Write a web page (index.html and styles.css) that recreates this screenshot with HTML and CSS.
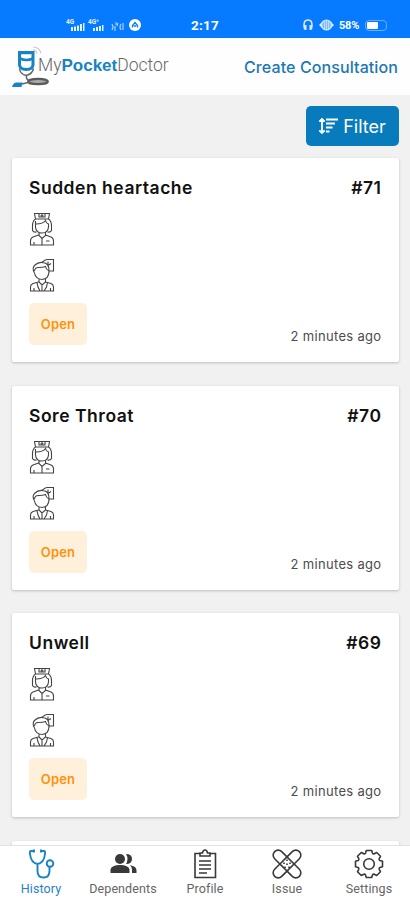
FILE: index.html
```html
<!DOCTYPE html>
<html lang="en">
<head>
<meta charset="utf-8">
<meta name="viewport" content="width=device-width, initial-scale=1">
<title>MyPocketDoctor</title>
<link rel="stylesheet" href="styles.css">
</head>
<body>
<svg class="defs" aria-hidden="true">
  <symbol id="nurse" viewBox="0 0 26 34">
    <path d="M5.500 1.500h15l-1 5.500h-13ZM10 1.500V5h6V1.500M13 2v3.500M11.500 3.800h3M6.500 7Q3.500 9 3.500 14v4.500q1 2 4 1.500M19.500 7Q22.500 9 22.500 14v4.500q-1 2-4 1.500M7 12Q14 12 16.500 8.500Q17 11 19.500 12v3Q19 21 13 21Q7 21 6.500 15V9M10 20.500v3l3 3 3.500-3v-3M9.500 23L4 25Q1.500 26 1.500 29v4h23v-4Q24.500 26 22 25l-5.500-2M13 26.500V33M17 29h3.500M5 30v3"/>
  </symbol>
  <symbol id="patient" viewBox="0 0 26 34">
    <path d="M13 4.500Q16 1.500 18 1.500h6.500V13H20M19 3.500v4l3-2M5.500 15Q2.500 10 6 7Q10 3 16 5Q20 6.500 20 12v3M5.500 13Q6 9 10 9.500Q14 9.500 16.500 8.500Q17 11.500 20 13Q20 21 13 21.500Q6.500 21 5.500 15M10 21v3l3 3 3.500-3v-3M9.500 24L4 25.500Q1.500 26.500 1.500 29v4h23v-4Q24.500 26.500 22 25.500L16.500 24M8 24.500L9 29l2 4M18.500 24.500L17.500 29l-2.500 4M13 27v6M5 30v3M21.500 30v3"/>
  </symbol>
</svg>
<div class="app">
  <div class="status">
    <div class="status-left">
      <svg width="78" height="14" viewBox="0 0 78 14">
        <g fill="#e3f0ff">
          <text x="0" y="6" class="net">4G</text>
          <path d="M5 9h2v4H5zM8 8.500h2V13H8zM11 7.500h2V13h-2zM14 6h2v7h-2zM17 5h1.500v8H17z"/>
          <text x="22" y="6" class="net">4G⁺</text>
          <path d="M27 10h2v3h-2zM30 9h2v4h-2zM33 8h2v5h-2zM36 7h1.500v6H36z"/>
        </g>
        <path d="M46 6q2 3 0 6M50 4v3M49 8v5M52 5l-1 3M57 5v7M55 6q-2 3 0 6" fill="none" stroke="#a9d0ff" stroke-width="1.200"/>
        <circle cx="69" cy="7" r="6" fill="#fff"/>
        <path d="M66.500 9.500v-2l2.500-3 2.500 3v2M67.800 8h2.400" fill="none" stroke="#0879f7" stroke-width="1.300"/>
      </svg>
    </div>
    <span class="clock">2:17</span>
    <div class="status-right">
      <svg width="33" height="14" viewBox="0 0 33 14">
        <path d="M2.500 11Q.5 2 6 2t3.500 9" fill="none" stroke="#d8eaff" stroke-width="1.500"/>
        <path d="M1.500 7h3v5h-2zM7.500 7h3l-1 5h-2z" fill="#d8eaff"/>
        <path d="M17 7l3-3v6zM32 7l-3-3v6z" fill="#d8eaff"/>
        <circle cx="24.500" cy="7" r="5" fill="#7dbbff" stroke="#d8eaff" stroke-width="1.200"/>
        <path d="M22.500 3v8M24.500 2v10M26.500 3v8" stroke="#d8eaff" stroke-width=".7"/>
      </svg>
      <span class="percent">58%</span>
      <span class="battery"><i></i></span>
    </div>
  </div>
  <header class="header">
    <div class="logo">
      <svg width="40" height="46" viewBox="0 0 40 46">
        <path d="M21 6q3 0 4 3.500M21 3q6 0 8 6" fill="none" stroke="#c4c4c4" stroke-width="1.200"/>
        <path d="M7.500 24.500Q8 30 14 31.500Q20.500 30 21.500 24.500M14.500 31.500q-1 5 5 5.500" fill="none" stroke="#666" stroke-width="1.500"/>
        <path d="M7.500 8.500h13.500v12q0 5-6.700 5t-6.800-5z" fill="#fff" stroke="#1683c4" stroke-width="3"/>
        <path d="M8 14.500q6.500 3 13 0" fill="none" stroke="#1683c4" stroke-width="2.600"/>
        <path d="M9 9.500h10" stroke="#1683c4" stroke-width="1.500"/>
        <ellipse cx="26" cy="37.500" rx="9.800" ry="2.700" fill="#aaa" stroke="#5a5a5a" stroke-width="2.300"/>
        <path d="M10 40l8-2" stroke="#666" stroke-width="1.500"/>
        <path d="M0 43q1-4 4-4.500h6.500L9.500 43z" fill="#1683c4"/>
      </svg>
      <span class="wordmark">My<b>Pocket</b>Doctor</span>
    </div>
    <a class="create">Create Consultation</a>
  </header>
  <main class="content">
    <div class="toolbar">
      <button class="filter">
        <svg width="21" height="18" viewBox="0 0 21 18" fill="none" stroke="#fff" stroke-width="1.800">
          <path d="M4 2v14M1.300 4.700L4 2l2.700 2.700M1.300 13.300L4 16l2.700-2.700M8 2.500h12M8 6.500h9M8 10.500h6.500M8 14.500h3.500"/>
        </svg>
        <span>Filter</span>
      </button>
    </div>
    <article class="card">
      <div class="card-head"><h2>Sudden heartache</h2><span>#71</span></div>
      <svg class="person"><use href="#nurse"/></svg>
      <svg class="person"><use href="#patient"/></svg>
      <div class="card-foot"><span class="badge">Open</span><time>2 minutes ago</time></div>
    </article>
    <article class="card">
      <div class="card-head"><h2>Sore Throat</h2><span>#70</span></div>
      <svg class="person"><use href="#nurse"/></svg>
      <svg class="person"><use href="#patient"/></svg>
      <div class="card-foot"><span class="badge">Open</span><time>2 minutes ago</time></div>
    </article>
    <article class="card">
      <div class="card-head"><h2>Unwell</h2><span>#69</span></div>
      <svg class="person"><use href="#nurse"/></svg>
      <svg class="person"><use href="#patient"/></svg>
      <div class="card-foot"><span class="badge">Open</span><time>2 minutes ago</time></div>
    </article>
    <article class="card"></article>
  </main>
  <nav class="tabs">
    <a class="tab active">
      <svg viewBox="0 0 30 30" fill="none" stroke="#1683c4" stroke-width="1.900">
        <path d="M8 2H5Q3.500 2 4 5q1 9 7.500 10Q18 14 19 5q.5-3-1-3h-3M8 .5v3M15 .5v3M11.500 15v7q0 6.500 6 6.500t6-6.500v-4"/>
        <circle cx="24" cy="14.500" r="3.300"/>
      </svg>
      <span>History</span>
    </a>
    <a class="tab">
      <svg viewBox="0 0 30 30" fill="#393939">
        <circle cx="12" cy="10" r="5"/>
        <path d="M2.500 24v-3.500q1-4.500 9.500-4.500t9.500 4.500v3.500zM18 5q6 0 6 5t-6 5q3-5 0-10zM22 16.300q6.500 1 6.500 5v2.700h-4.500v-3.500q0-2.500-2-4.200z"/>
      </svg>
      <span>Dependents</span>
    </a>
    <a class="tab">
      <svg viewBox="0 0 30 30" fill="none" stroke="#393939" stroke-width="1.600">
        <path d="M10 4.500H5v24h20.500v-24H20M10 7V4h2.500q.5-3 2.500-3t2.500 3H20v3zM9 12h12M9 16h12M9 20h12M9 24h8"/>
      </svg>
      <span>Profile</span>
    </a>
    <a class="tab">
      <svg viewBox="0 0 30 30" fill="none" stroke="#393939" stroke-width="1.600">
        <g transform="rotate(45 15 15)"><rect x="-2.500" y="10" width="35" height="10" rx="5"/><path d="M10 10V2.500a5 5 0 0 1 10 0V10M10 20v7.500a5 5 0 0 0 10 0V20M10 10v10M20 10v10"/></g>
        <path d="M15 10.500v1.500M12 13.500v1.500M18 13.500v1.500M15 14.500v1.500M13 17.500v1.500M17 17.500v1.500"/>
      </svg>
      <span>Issue</span>
    </a>
    <a class="tab">
      <svg viewBox="-15 -15 30 30" fill="none" stroke="#393939" stroke-width="1.600" stroke-linejoin="round">
        <path d="M10.900-3.500L13.500-2.700V2.700L10.900 3.500Q9.800 4.200 10.200 5.300L11.500 7.700L7.700 11.500L5.300 10.200Q4.200 9.800 3.500 10.900L2.700 13.500H-2.700L-3.500 10.900Q-4.200 9.800-5.300 10.200L-7.700 11.500L-11.500 7.700L-10.200 5.300Q-9.800 4.200-10.900 3.500L-13.500 2.700V-2.700L-10.900-3.500Q-9.800-4.200-10.200-5.300L-11.500-7.700L-7.700-11.500L-5.300-10.200Q-4.200-9.800-3.500-10.900L-2.700-13.500H2.700L3.500-10.900Q4.200-9.800 5.300-10.200L7.700-11.500L11.500-7.700L10.200-5.300Q9.800-4.200 10.900-3.500Z"/>
        <circle r="5.300"/>
      </svg>
      <span>Settings</span>
    </a>
  </nav>
</div>
</body>
</html>
```
FILE: styles.css
```css
* { box-sizing: border-box; }
body { margin: 0; font-family: Inter, "Liberation Sans", sans-serif; }
.defs { display: none; }
.app { width: 410px; height: 900px; display: flex; flex-direction: column; overflow: hidden; background: #f1f1f1; }
.status { flex: none; height: 38px; padding: 12px 24px 0 66px; display: grid; grid-template-columns: 125px 111px 1fr; align-items: center; background: #067bff; color: #fff; font-family: Roboto, sans-serif; }
.status svg { display: block; }
.net { font: bold 6.5px Roboto, sans-serif; }
.clock { font-size: 13.5px; font-weight: 700; letter-spacing: .2px; }
.status-right { display: flex; align-items: center; }
.percent { margin-left: 4px; width: 25px; font-size: 11px; font-weight: 700; letter-spacing: -.2px; }
.battery { width: 22px; height: 11px; margin-left: 1px; padding: 1px; border: 1px solid #65adff; border-radius: 4px; }
.battery i { display: block; width: 11px; height: 7px; background: #fff; border-radius: 1px; }
.header { flex: none; height: 57px; padding: 0 12px; display: flex; justify-content: space-between; background: #fefefe; }
.logo { display: flex; padding-top: 6px; }
.logo svg { flex: none; }
.wordmark { margin: 11px 0 0 -14px; font: 300 17.5px/21px Roboto, sans-serif; letter-spacing: 0; color: #666; white-space: nowrap; }
.wordmark b { font: 700 17px/21px "Liberation Sans", sans-serif; letter-spacing: 0; color: #1683c4; }
.create { padding-top: 18px; font-size: 16px; line-height: 22px; font-weight: 500; letter-spacing: .1px; color: #1b78b5; white-space: nowrap; }
.content { flex: 1; min-height: 0; overflow: hidden; padding: 11px 11.5px 0 12px; }
.toolbar { display: flex; justify-content: flex-end; margin-bottom: 12px; }
.filter { width: 93px; height: 40px; display: flex; align-items: center; justify-content: center; gap: 4px; padding: 0; border: 0; border-radius: 5px; background: #087bbd; color: #fff; font: 18px Inter, sans-serif; }
.card { height: 204px; margin-bottom: 23.5px; padding: 17px; background: #fff; border-radius: 2px; box-shadow: 0 1px 3px rgba(0, 0, 0, .22); }
.card-head { height: 25px; margin-bottom: 12px; display: flex; justify-content: space-between; font-size: 17.5px; line-height: 25px; font-weight: 600; letter-spacing: .53px; color: #111; }
.card-head h2 { margin: 0; font: inherit; }
.person { display: block; width: 26px; height: 34px; margin-bottom: 12px; fill: none; stroke: #444; stroke-width: 1.1; }
.card-foot { display: flex; justify-content: space-between; margin-top: -1px; }
.badge { width: 58px; height: 42px; border-radius: 5px; background: #fff0dc; color: #ff9208; font-size: 13px; line-height: 42px; font-weight: 600; letter-spacing: .2px; text-align: center; }
.card time { padding-top: 24px; font-size: 13px; line-height: 18px; color: #4c4c4c; letter-spacing: .32px; }
.tabs { flex: none; height: 55px; display: grid; grid-template-columns: repeat(5, 1fr); border-top: 1px solid #e3e3e3; background: #fff; }
.tab { display: flex; flex-direction: column; align-items: center; padding-top: 3px; font-family: Roboto, sans-serif; font-size: 12.5px; line-height: 16px; letter-spacing: .1px; color: #666; }
.tab svg { width: 30px; height: 30px; margin-bottom: 2px; }
.active { color: #2583c4; }
```
